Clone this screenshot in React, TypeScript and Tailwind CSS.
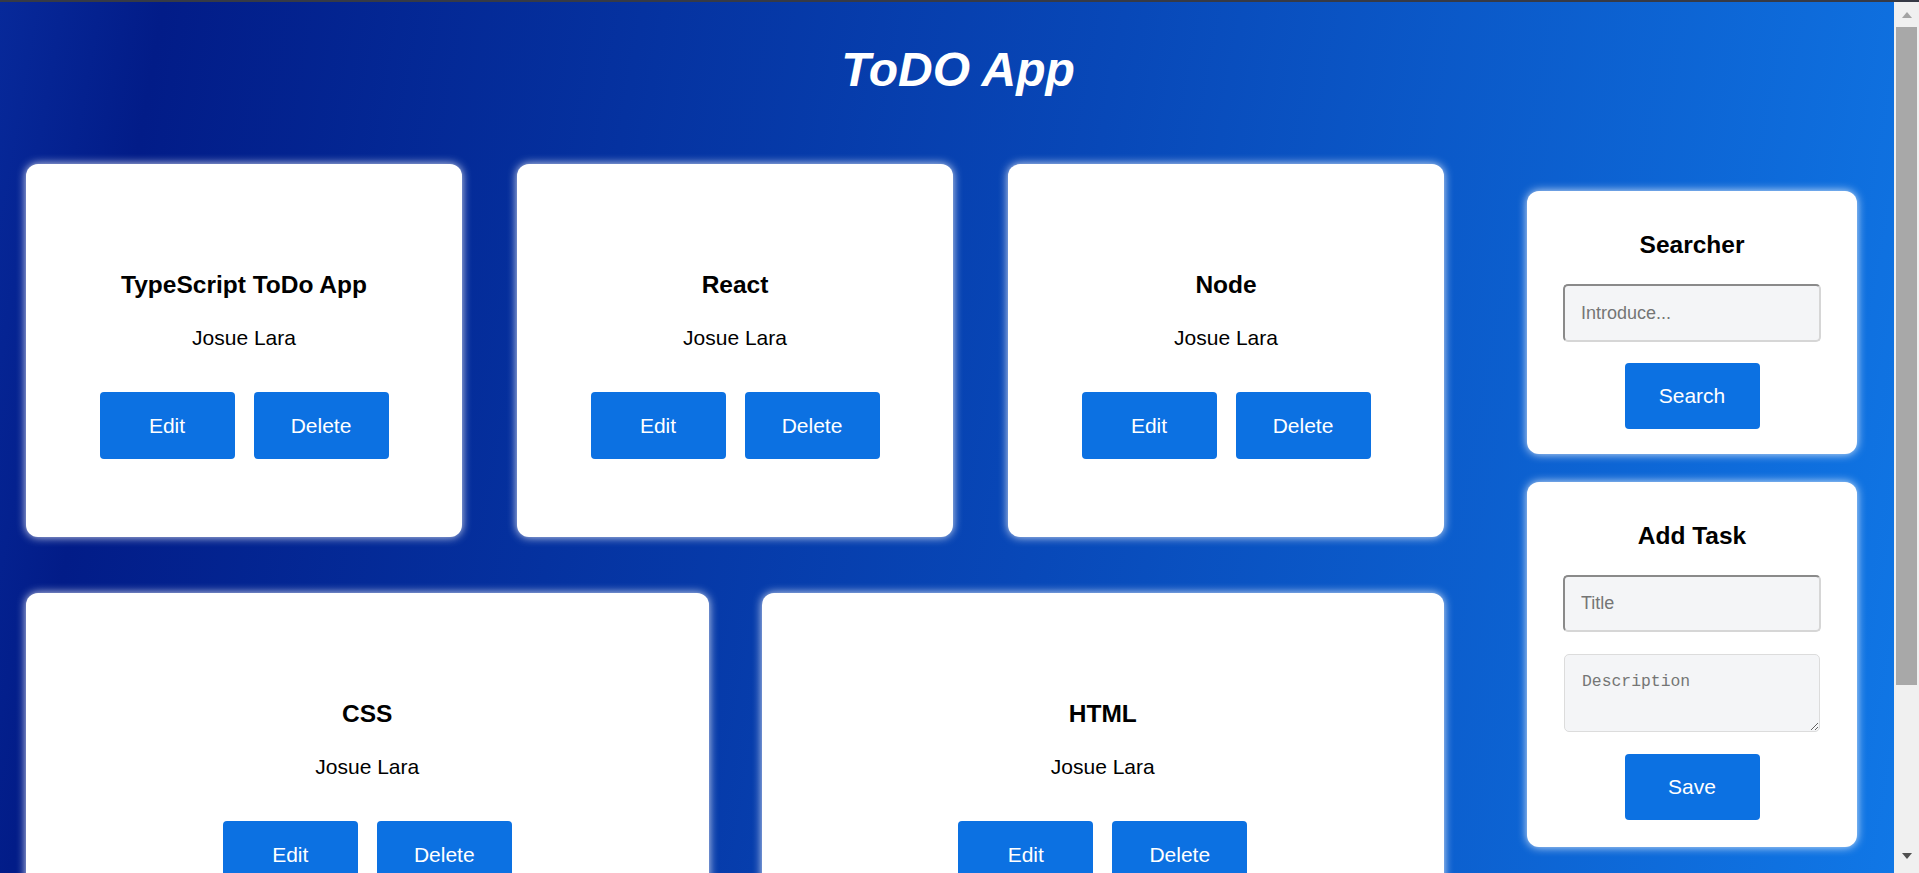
import React from "react";

const cards = [
  { title: "TypeScript ToDo App", author: "Josue Lara" },
  { title: "React", author: "Josue Lara" },
  { title: "Node", author: "Josue Lara" },
  { title: "CSS", author: "Josue Lara" },
  { title: "HTML", author: "Josue Lara" },
];

function Btn({ children }: { children: React.ReactNode }) {
  return (
    <button className="w-[135px] h-[67px] rounded-[4px] bg-[#0c71e2] text-white text-[21px] leading-[24px]">
      {children}
    </button>
  );
}

function Card({ title, author }: { title: string; author: string }) {
  return (
    <div className="flex-1 h-[373px] shrink-0 bg-white rounded-[12px] shadow-[0_0_10px_rgba(255,255,255,0.85)] flex flex-col items-center pt-[107px] text-center text-black">
      <h2 className="text-[24.5px] leading-[28px] font-bold">{title}</h2>
      <p className="mt-[27px] text-[21px] leading-[24px]">{author}</p>
      <div className="mt-[42px] flex gap-[19px]">
        <Btn>Edit</Btn>
        <Btn>Delete</Btn>
      </div>
    </div>
  );
}

function Scrollbar() {
  return (
    <div className="w-[25px] h-full bg-[#f0f0f0] flex flex-col items-center">
      <div className="h-[25px] w-full flex items-start justify-center pt-[10px]">
        <svg width="10" height="6" viewBox="0 0 10 6">
          <polygon points="5,0 10,6 0,6" fill="#a3a3a3" />
        </svg>
      </div>
      <div className="w-[21px] h-[658px] bg-[#a8a8a8]" />
      <div className="flex-1" />
      <div className="h-[20px] w-full flex items-start justify-center">
        <svg width="10" height="6" viewBox="0 0 10 6">
          <polygon points="0,0 10,0 5,6" fill="#505050" />
        </svg>
      </div>
    </div>
  );
}

export default function App() {
  return (
    <div
      className="h-[873px] overflow-hidden flex flex-col bg-[#1077e6]"
      style={{ fontFamily: '"Liberation Sans", Arial, sans-serif' }}
    >
      <div className="h-[2px] bg-[#363a46] shrink-0" />
      <div className="flex-1 flex min-h-0">
        <div className="flex-1 min-w-0 overflow-hidden bg-[linear-gradient(100deg,#07299a_0%,#021c88_8%,#0848b8_55%,#1077e6_100%)]">
          <h1 className="mt-[40px] pl-[22px] text-center text-white text-[48px] leading-[55px] font-bold italic">ToDO App</h1>
          <div className="mt-[67px] flex pl-[26px] pr-[37px] gap-[83px] items-start">
            <div className="flex-1 flex flex-col gap-[56px]">
              <div className="flex gap-[55px]">
                {cards.slice(0, 3).map((c) => (
                  <Card key={c.title} title={c.title} author={c.author} />
                ))}
              </div>
              <div className="flex gap-[53px]">
                {cards.slice(3).map((c) => (
                  <Card key={c.title} title={c.title} author={c.author} />
                ))}
              </div>
            </div>
            <div className="w-[330px] mt-[27px] flex flex-col gap-[28px]">
              <div className="bg-white rounded-[12px] shadow-[0_0_10px_rgba(255,255,255,0.85)] flex flex-col items-center pt-[40px] pb-[25px]">
                <h2 className="text-[24.5px] leading-[28px] font-bold text-black">Searcher</h2>
                <input
                  placeholder="Introduce..."
                  className="mt-[25px] w-[258px] h-[58px] rounded-[5px] border-2 border-t-[#8a8a8a] border-l-[#8a8a8a] border-b-[#d6d6d6] border-r-[#d6d6d6] bg-[#f4f5f7] px-[16px] text-[18px] placeholder:text-[#757575] outline-none"
                />
                <div className="mt-[21px]">
                  <button className="w-[135px] h-[66px] rounded-[4px] bg-[#0c71e2] text-white text-[21px] leading-[24px]">Search</button>
                </div>
              </div>
              <div className="bg-white rounded-[12px] shadow-[0_0_10px_rgba(255,255,255,0.85)] flex flex-col items-center pt-[40px] pb-[27px]">
                <h2 className="text-[24.5px] leading-[28px] font-bold text-black">Add Task</h2>
                <input
                  placeholder="Title"
                  className="mt-[25px] w-[258px] h-[57px] rounded-[5px] border-2 border-t-[#8a8a8a] border-l-[#8a8a8a] border-b-[#d6d6d6] border-r-[#d6d6d6] bg-[#f4f5f7] px-[16px] text-[18px] placeholder:text-[#757575] outline-none"
                />
                <textarea
                  placeholder="Description"
                  autoFocus
                  className="mt-[22px] w-[256px] h-[78px] rounded-[5px] border border-[#dcdcdc] bg-[#f4f5f7] px-[17px] pt-[17px] text-[16.4px] leading-[20px] placeholder:text-[#757575] outline-none focus:outline-none"
                  style={{ fontFamily: '"Liberation Mono", monospace' }}
                />
                <div className="mt-[22px]">
                  <button className="w-[135px] h-[66px] rounded-[4px] bg-[#0c71e2] text-white text-[21px] leading-[24px]">Save</button>
                </div>
              </div>
            </div>
          </div>
        </div>
        <Scrollbar />
      </div>
    </div>
  );
}
